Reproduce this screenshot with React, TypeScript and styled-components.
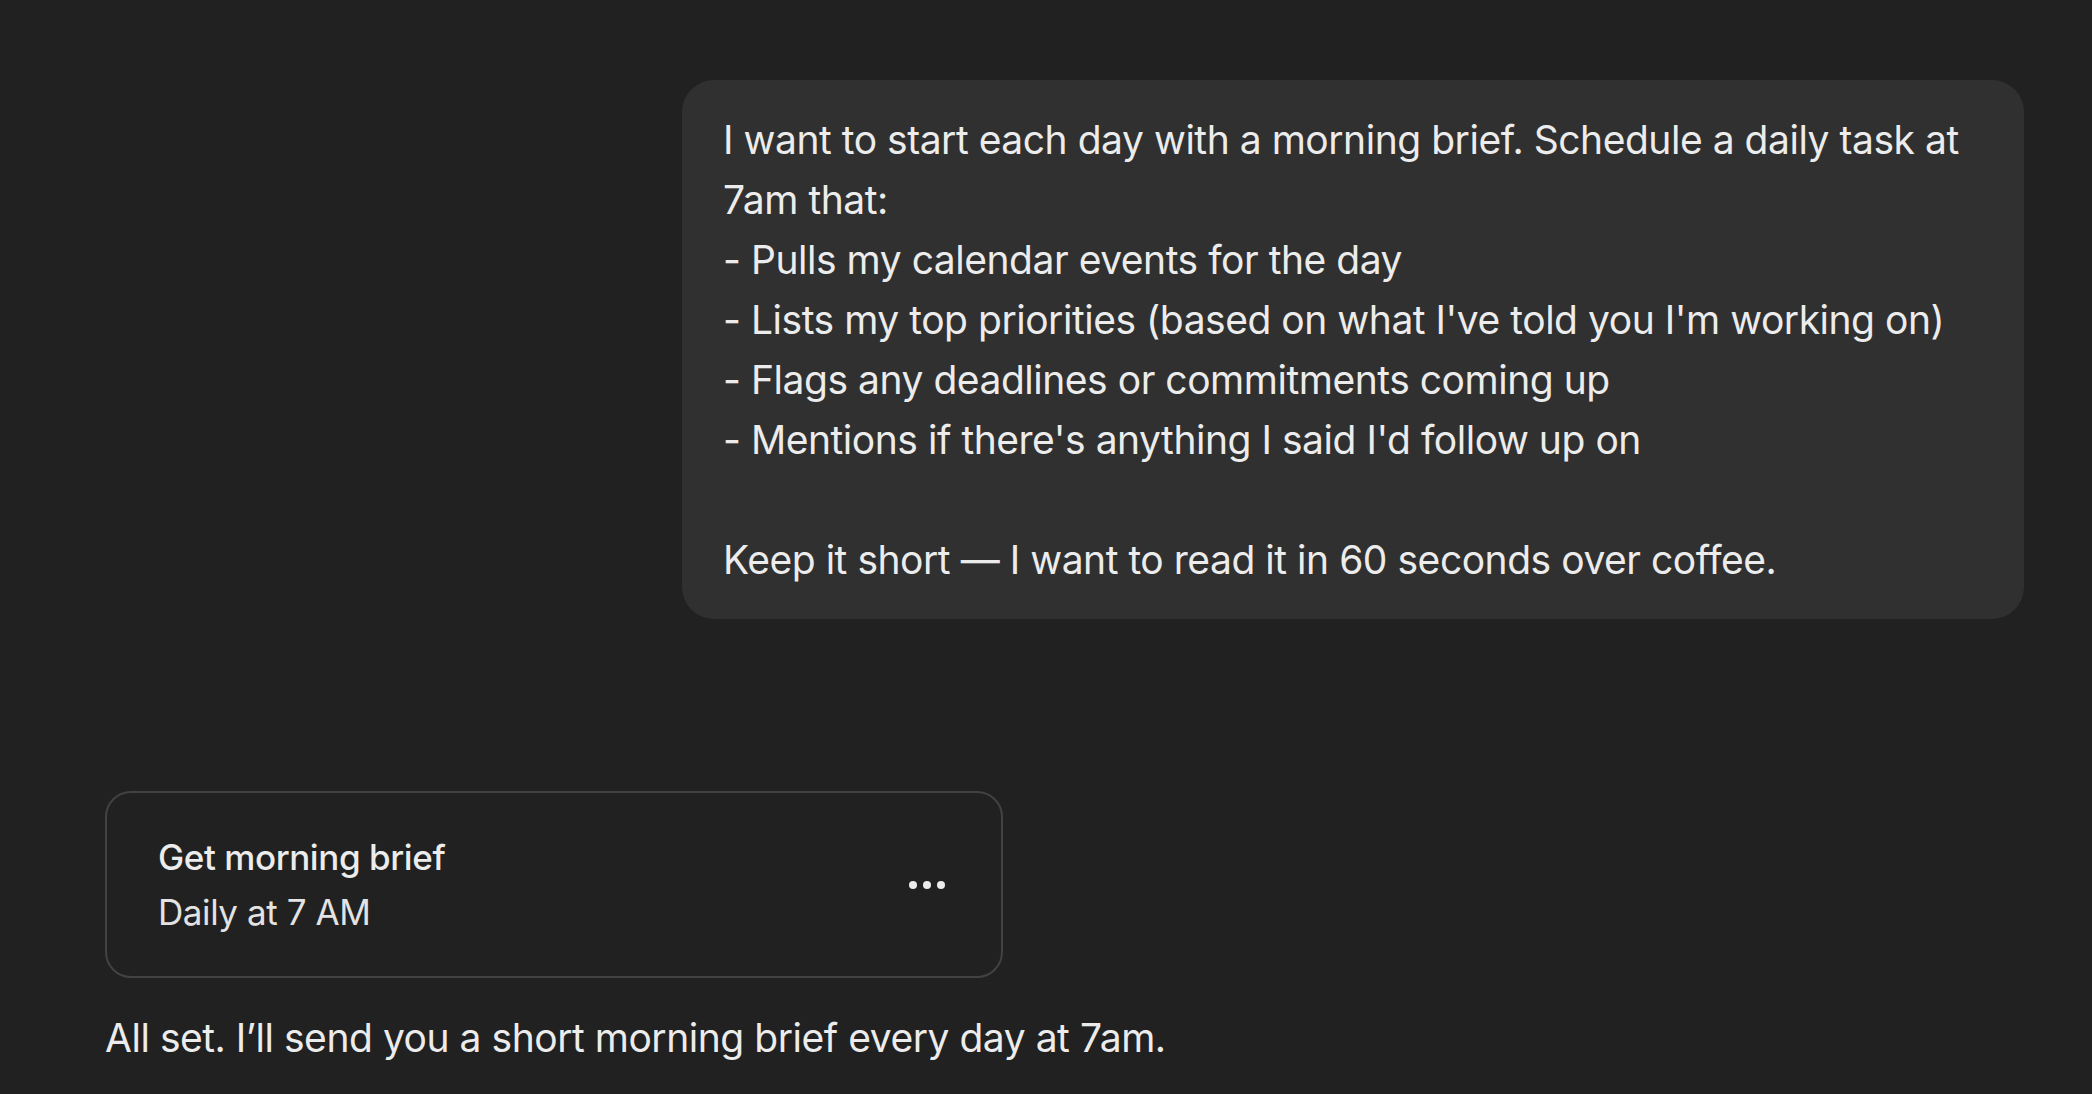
import React from 'react';
import styled, { createGlobalStyle } from 'styled-components';

const GlobalStyle = createGlobalStyle`
  html, body {
    margin: 0;
    padding: 0;
    background: #212121;
  }

  body {
    font-family: Inter, "Noto Sans", sans-serif;
    color: #ececec;
    -webkit-font-smoothing: antialiased;
  }
`;

const Thread = styled.div`
  display: flex;
  flex-direction: column;
  padding: 80px 68px 40px 105px;
  min-height: 1094px;
  box-sizing: border-box;
`;

const UserRow = styled.div`
  display: flex;
  justify-content: flex-end;
`;

const Bubble = styled.div`
  width: 1342px;
  box-sizing: border-box;
  background: #303030;
  border-radius: 32px;
  padding: 30px 40px 29px 41px;
  font-size: 39px;
  line-height: 60px;
  letter-spacing: -0.012em;
  white-space: pre-wrap;
`;

const AssistantBlock = styled.div`
  display: flex;
  flex-direction: column;
  align-items: flex-start;
  margin-top: 172px;
  gap: 30px;
`;

const TaskCard = styled.div`
  width: 898px;
  height: 187px;
  box-sizing: border-box;
  border: 2px solid #424242;
  border-radius: 26px;
  display: flex;
  align-items: center;
  justify-content: space-between;
  padding: 0 56px 0 51px;
`;

const TaskInfo = styled.div`
  display: flex;
  flex-direction: column;
  gap: 7px;
`;

const TaskTitle = styled.div`
  font-size: 35px;
  font-weight: 500;
  line-height: 48px;
  letter-spacing: -0.012em;
`;

const TaskSchedule = styled.div`
  font-size: 35px;
  line-height: 48px;
  letter-spacing: -0.012em;
  color: #e3e3e3;
`;

const MoreButton = styled.button`
  background: none;
  border: none;
  padding: 0;
  display: flex;
  gap: 6px;
  cursor: pointer;
`;

const Dot = styled.span`
  width: 8px;
  height: 8px;
  border-radius: 50%;
  background: #ececec;
`;

const Reply = styled.p`
  margin: 0;
  font-size: 39px;
  line-height: 60px;
  letter-spacing: -0.012em;
`;

const message = `I want to start each day with a morning brief. Schedule a daily task at 7am that:
- Pulls my calendar events for the day
- Lists my top priorities (based on what I've told you I'm working on)
- Flags any deadlines or commitments coming up
- Mentions if there's anything I said I'd follow up on

Keep it short — I want to read it in 60 seconds over coffee.`;

const App = () => (
  <>
    <GlobalStyle />
    <Thread>
      <UserRow>
        <Bubble>{message}</Bubble>
      </UserRow>
      <AssistantBlock>
        <TaskCard>
          <TaskInfo>
            <TaskTitle>Get morning brief</TaskTitle>
            <TaskSchedule>Daily at 7 AM</TaskSchedule>
          </TaskInfo>
          <MoreButton aria-label="More options">
            <Dot />
            <Dot />
            <Dot />
          </MoreButton>
        </TaskCard>
        <Reply>All set. I’ll send you a short morning brief every day at 7am.</Reply>
      </AssistantBlock>
    </Thread>
  </>
);

export default App;
